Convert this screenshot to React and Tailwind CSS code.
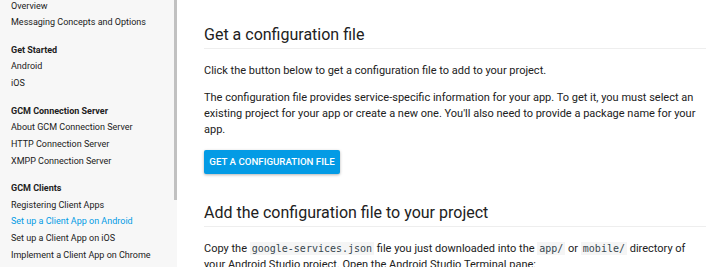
import React from "react";

const sections = [
  { title: null, items: ["Overview", "Messaging Concepts and Options"] },
  { title: "Get Started", items: ["Android", "iOS"] },
  {
    title: "GCM Connection Server",
    items: ["About GCM Connection Server", "HTTP Connection Server", "XMPP Connection Server"],
  },
  {
    title: "GCM Clients",
    items: [
      "Registering Client Apps",
      "Set up a Client App on Android",
      "Set up a Client App on iOS",
      "Implement a Client App on Chrome",
    ],
  },
];

function Code({ children }) {
  return (
    <code className="bg-[#f5f5f5] px-[2px] py-[1px] text-[10px] text-[#37474f] [font-family:'DejaVu_Sans_Mono',monospace]">
      {children}
    </code>
  );
}

export default function App() {
  return (
    <div className="flex h-[267px] w-[720px] overflow-hidden bg-white text-[#212121] [font-family:Roboto,'Noto_Sans',sans-serif]">
      <aside className="relative w-[177px] shrink-0 bg-[#f7f7f7] pl-[11px]">
        <div className="-mt-[2.3px] flex flex-col text-[9px]">
          {sections.map((s, i) => (
            <div key={i} className={i === 0 ? "" : "mt-[10.8px]"}>
              {s.title && (
                <div className="h-[16.67px] leading-[16.67px] font-bold whitespace-nowrap">{s.title}</div>
              )}
              {s.items.map((it) => (
                <div
                  key={it}
                  className={
                    "h-[16.67px] leading-[16.67px] whitespace-nowrap " +
                    (it === "Set up a Client App on Android" ? "text-[#039be5]" : "")
                  }
                >
                  {it}
                </div>
              ))}
            </div>
          ))}
        </div>
        <div className="absolute right-0 top-0 h-[200px] w-[3.5px] bg-[#c1c1c1]" />
      </aside>
      <main className="w-[502px] shrink-0 pl-[27px] pt-[25px]">
        <div className="w-[502px]">
          <h2 className="border-b border-[#eeeeee] pb-[3px] text-[16px] leading-[20px] font-normal">
            Get a configuration file
          </h2>
          <p className="mt-[14px] text-[11px] leading-[16px]">
            Click the button below to get a configuration file to add to your project.
          </p>
          <p className="mt-[11px] text-[11px] leading-[15.8px]">
            The configuration file provides service-specific information for your app. To get it, you must select an
            existing project for your app or create a new one. You'll also need to provide a package name for your
            app.
          </p>
          <button className="mt-[12.5px] flex h-[24px] w-[136px] items-center justify-center rounded-[2px] bg-[#039be5] text-[9.7px] font-medium text-white shadow-[0_1px_3px_rgba(0,0,0,0.3)]">
            GET A CONFIGURATION FILE
          </button>
          <h2 className="mt-[29px] border-b border-[#eeeeee] pb-[3px] text-[16px] leading-[20px] font-normal">
            Add the configuration file to your project
          </h2>
          <p className="mt-[14px] text-[11px] leading-[16px]">
            Copy the <Code>google-services.json</Code> file you just downloaded into the <Code>app/</Code> or{" "}
            <Code>mobile/</Code> directory of your Android Studio project. Open the Android Studio Terminal pane:
          </p>
        </div>
      </main>
    </div>
  );
}
